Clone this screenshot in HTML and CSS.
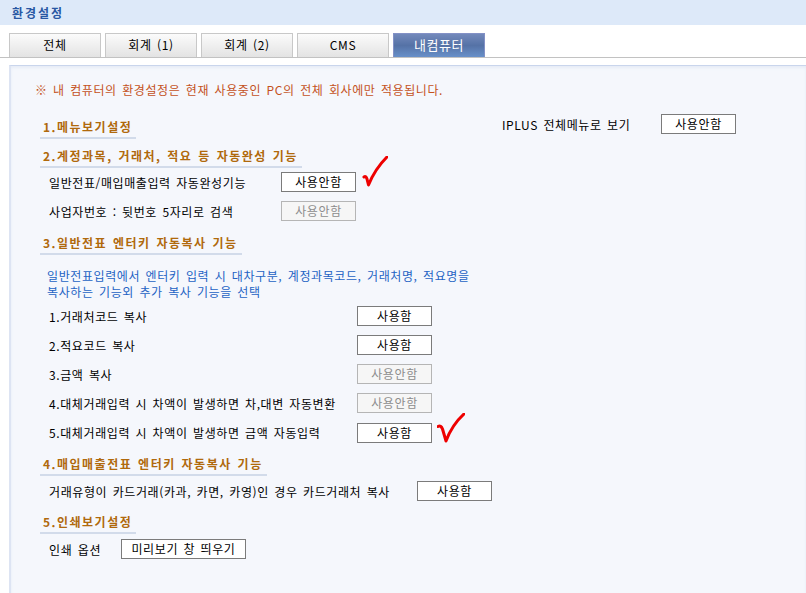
FILE: index.html
```html
<!DOCTYPE html>
<html lang="ko">

<head>
    <meta charset="UTF-8">
    <meta name="viewport" content="width=device-width, initial-scale=1.0">
    <title>환경설정</title>
    <link rel="stylesheet" href="styles.css">
</head>

<body>
    <header class="header">
        <h1 class="header__title">환경설정</h1>
    </header>

    <nav class="tabs">
        <span class="tab">전체</span>
        <span class="tab">회계 (1)</span>
        <span class="tab">회계 (2)</span>
        <span class="tab">CMS</span>
        <span class="tab tab--active">내컴퓨터</span>
    </nav>

    <section class="panel">
        <p class="notice">※ 내 컴퓨터의 환경설정은 현재 사용중인 PC의 전체 회사에만 적용됩니다.</p>

        <div class="group group--menu">
            <div class="group__top">
                <h3 class="group__title">1.메뉴보기설정</h3>
                <div class="option option--top">
                    <span class="option__label option__label--top">IPLUS 전체메뉴로 보기</span>
                    <button class="btn">사용안함</button>
                </div>
            </div>
        </div>

        <div class="group group--auto">
            <h3 class="group__title">2.계정과목, 거래처, 적요 등 자동완성 기능</h3>
            <div class="option option--first">
                <span class="option__label option__label--auto">일반전표/매입매출입력 자동완성기능</span>
                <button class="btn">사용안함</button>
                <svg class="check check--one" width="26" height="31" viewBox="0 0 26 31">
                    <path d="M2 21 Q4 19.5 5 23 L6.5 29 Q13 13 25 1" />
                </svg>
            </div>
            <div class="option">
                <span class="option__label option__label--auto">사업자번호 : 뒷번호 5자리로 검색</span>
                <button class="btn btn--off">사용안함</button>
            </div>
        </div>

        <div class="group group--copy">
            <h3 class="group__title">3.일반전표 엔터키 자동복사 기능</h3>
            <p class="desc">일반전표입력에서 엔터키 입력 시 대차구분, 계정과목코드, 거래처명, 적요명을<br>복사하는 기능외 추가 복사 기능을 선택</p>
            <div class="option option--list">
                <span class="option__label option__label--copy">1.거래처코드 복사</span>
                <button class="btn">사용함</button>
            </div>
            <div class="option">
                <span class="option__label option__label--copy">2.적요코드 복사</span>
                <button class="btn">사용함</button>
            </div>
            <div class="option">
                <span class="option__label option__label--copy">3.금액 복사</span>
                <button class="btn btn--off">사용안함</button>
            </div>
            <div class="option">
                <span class="option__label option__label--copy">4.대체거래입력 시 차액이 발생하면 차,대변 자동변환</span>
                <button class="btn btn--off">사용안함</button>
            </div>
            <div class="option">
                <span class="option__label option__label--copy">5.대체거래입력 시 차액이 발생하면 금액 자동입력</span>
                <button class="btn">사용함</button>
                <svg class="check check--two" width="28" height="30" viewBox="0 0 28 30">
                    <path d="M1 13.5 Q4 12 5.5 16 L9 28 Q15 12 27 1" />
                </svg>
            </div>
        </div>

        <div class="group group--sales">
            <h3 class="group__title">4.매입매출전표 엔터키 자동복사 기능</h3>
            <div class="option option--first">
                <span class="option__label option__label--sales">거래유형이 카드거래(카과, 카면, 카영)인 경우 카드거래처 복사</span>
                <button class="btn">사용함</button>
            </div>
        </div>

        <div class="group group--print">
            <h3 class="group__title">5.인쇄보기설정</h3>
            <div class="option option--first">
                <span class="option__label option__label--print">인쇄 옵션</span>
                <button class="btn btn--wide">미리보기 창 띄우기</button>
            </div>
        </div>
    </section>
</body>

</html>
```

FILE: styles.css
```css
* {
    box-sizing: border-box;
}

body {
    margin: 0;
    padding: 0;
    background-color: #ffffff;
    color: #000000;
    font-family: 'Noto Sans CJK KR', 'Noto Sans', sans-serif;
    font-size: 12px;
    letter-spacing: 0.6px;
    word-spacing: 1.5px;
    overflow: hidden;
}

.header {
    height: 25px;
    background-color: #dde9f9;
    padding-left: 12px;
}

.header__title {
    margin: 0;
    font-size: 12px;
    line-height: 26px;
    font-weight: bold;
    letter-spacing: 2px;
    color: #2857a3;
}

/* tabs */

.tabs {
    display: flex;
    gap: 4px;
    margin-top: 8px;
    padding-left: 9px;
    border-bottom: 1px solid #c2c2c2;
}

.tab {
    width: 92px;
    height: 24px;
    border: 1px solid #c8c8c8;
    border-bottom: 0;
    background: linear-gradient(#fbfbfb, #e3e3e3);
    text-align: center;
    line-height: 22px;
}

.tab--active {
    border-color: #8391c6;
    background: linear-gradient(#7389bb, #5572a6 50%, #6890c9);
    color: #ffffff;
    font-size: 13px;
}

/* panel */

.panel {
    margin: 7px 0 0 9px;
    padding: 16px 0 40px 0;
    background-color: #f5f7fc;
    border-top: 1px solid #c9d5ec;
    border-left: 2px solid #dde4f3;
    box-shadow: inset 0 2px 3px #e6ecf6;
}

.notice {
    margin: 0 0 0 24px;
    line-height: 16px;
    color: #c4521c;
}

.group {
    margin-left: 29px;
}

.group--menu {
    margin-top: 21px;
}

.group--auto {
    margin-top: 9px;
}

.group--copy,
.group--sales,
.group--print {
    margin-top: 13px;
}

.group--copy {
    margin-top: 14px;
}

.group__top {
    display: grid;
    grid-template-columns: 462px auto;
    align-items: start;
}

.group__title {
    width: fit-content;
    margin: 0;
    padding: 0 4px 2px 3px;
    border-bottom: 2px solid #d2dbea;
    font-size: 12px;
    line-height: 16px;
    font-weight: bold;
    letter-spacing: 1.5px;
    word-spacing: 1px;
    color: #b0690c;
}

.desc {
    margin: 13px 0 0 7px;
    line-height: 16px;
    color: #2463c4;
}

/* option rows */

.option {
    display: flex;
    align-items: center;
    margin-top: 9px;
    padding-left: 9px;
}

.option--first {
    margin-top: 5px;
}

.group--auto .option--first {
    margin-top: 4px;
}

.option--list {
    margin-top: 6px;
}

.option--top {
    margin-top: -5px;
    padding-left: 0;
}

.option__label--top {
    width: 159px;
}

.option__label--auto {
    width: 232px;
}

.option__label--copy {
    width: 308px;
}

.option__label--sales {
    width: 368px;
}

.option__label--print {
    width: 72px;
}

.btn {
    width: 75px;
    height: 20px;
    padding: 0;
    border: 1px solid #7b7b7b;
    background-color: #ffffff;
    color: #000000;
    font: inherit;
    letter-spacing: inherit;
    word-spacing: inherit;
    line-height: 18px;
}

.btn--off {
    border-color: #b5b5b5;
    background-color: #f6f6f6;
    color: #8d8d8d;
}

.btn--wide {
    width: 125px;
}

/* hand drawn checks */

.check {
    display: block;
    fill: none;
    stroke: #ee0000;
    stroke-width: 3;
    stroke-linecap: round;
    stroke-linejoin: round;
}

.check--one {
    margin: -16px 0 5px 6px;
}

.check--two {
    margin: -9px 0 0 5px;
}
```
